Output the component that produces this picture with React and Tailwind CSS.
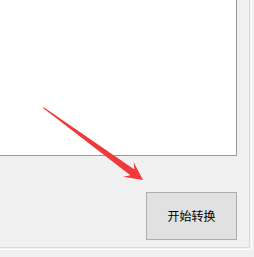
export default function App() {
  return (
    <div className="relative w-[254px] h-[257px] bg-[#f0f0f0] overflow-hidden" style={{ fontFamily: '"Noto Sans CJK SC", sans-serif' }}>
      <div className="w-[252px] h-[250px] border-r border-b border-white">
        <div className="w-[250px] h-[248px] border-r border-b border-[#dadada] flex flex-col">
          <div className="w-[237px] h-[156px] bg-white border-r border-b border-[#9a9a9a]" />
          <div className="mt-[36px] ml-[146px] w-[91px] h-[48px] bg-[#e1e1e1] border border-[#adadad] flex items-center justify-center text-[12px] text-black">
            开始转换
          </div>
        </div>
      </div>
      <svg className="absolute left-0 top-0" width="254" height="257" viewBox="0 0 254 257">
        <polygon
          points="43,108 130.4,175.2 123.1,176.8 143,180 133.7,162.2 134.4,169.6 43.8,107.2"
          fill="#f03a3a"
        />
      </svg>
    </div>
  );
}
